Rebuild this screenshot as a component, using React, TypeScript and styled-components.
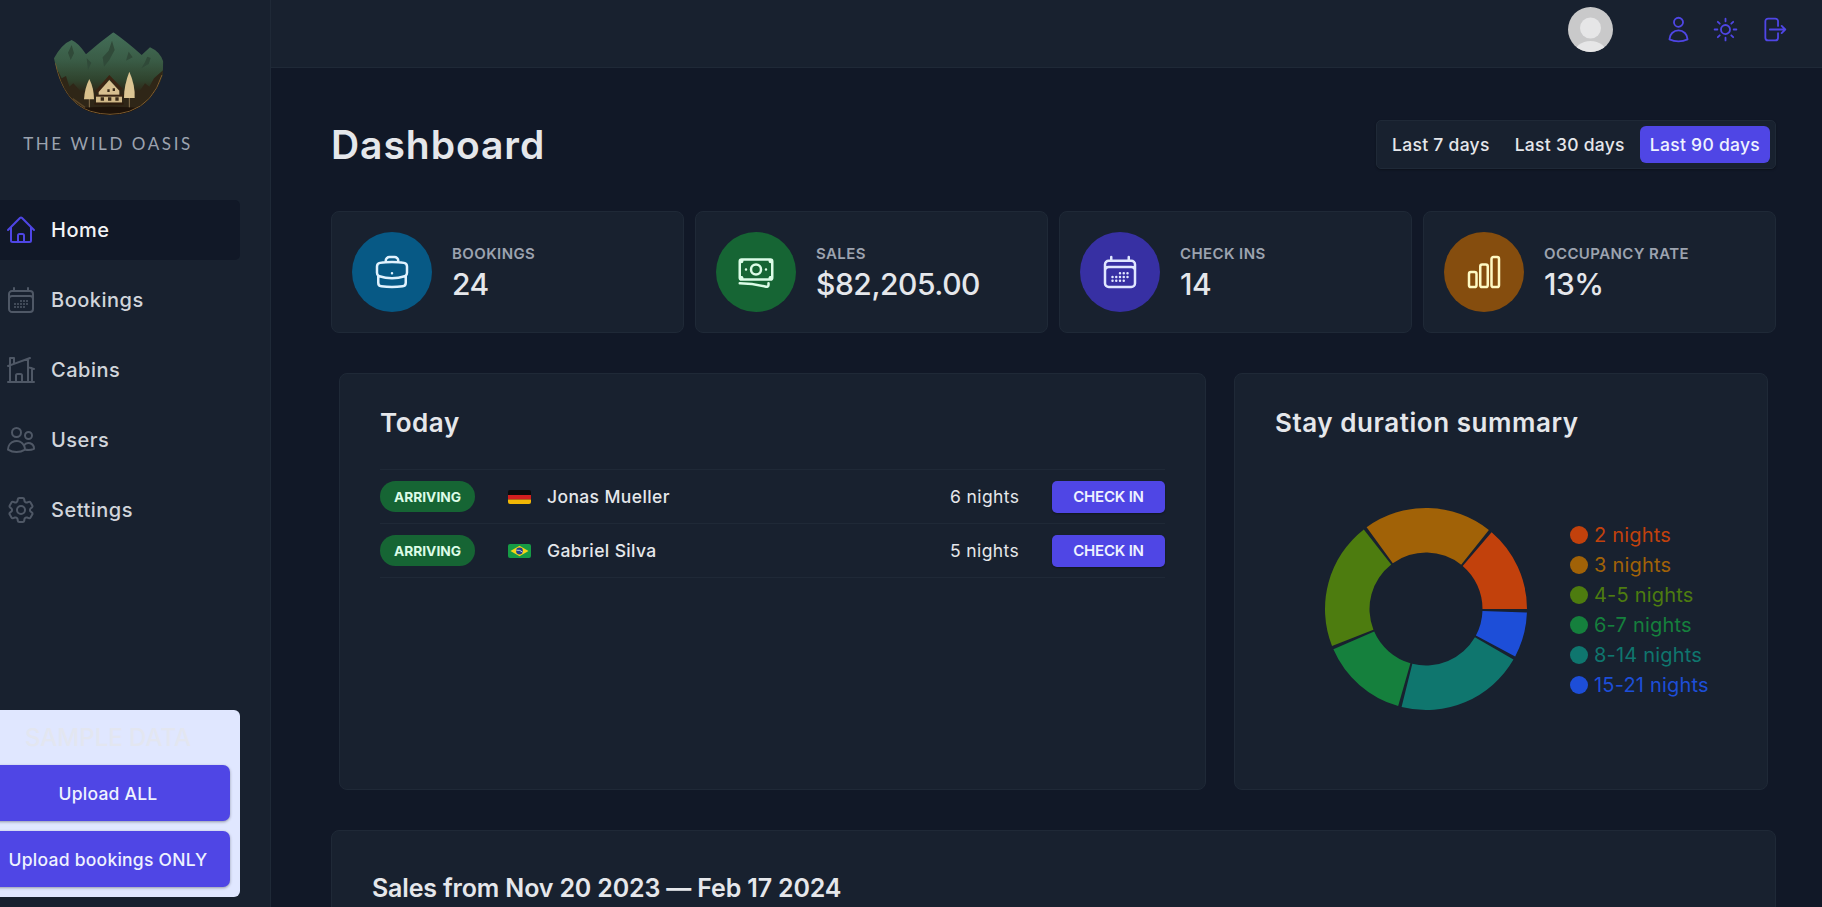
import * as React from 'react';
import styled, {createGlobalStyle} from 'styled-components';
import {
  HiOutlineHome,
  HiOutlineCalendarDays,
  HiOutlineHomeModern,
  HiOutlineUsers,
  HiOutlineCog6Tooth,
  HiOutlineUser,
  HiOutlineSun,
  HiOutlineArrowRightOnRectangle,
  HiOutlineBriefcase,
  HiOutlineBanknotes,
  HiOutlineChartBar,
} from 'react-icons/hi2';

const GlobalStyle = createGlobalStyle`
  html, body {
    margin: 0;
    height: 100%;
    overflow: hidden;
    background: #111827;
  }
  body {
    font-family: Inter, "Noto Sans", sans-serif;
    color: #e5e7eb;
  }
  * {
    box-sizing: border-box;
  }
`;

const Layout = styled.div`
  display: grid;
  grid-template-columns: 271px 1fr;
  grid-template-rows: 68px 1fr;
  height: 907px;
  overflow: hidden;
`;

const Sidebar = styled.aside`
  grid-row: 1 / -1;
  background: #18212f;
  border-right: 1px solid #1f2937;
  padding-right: 30px;
  padding-bottom: 10px;
  display: flex;
  overflow: hidden;
`;

const SidebarColumn = styled.div`
  flex: none;
  width: 264px;
  margin-left: -24px;
  display: flex;
  flex-direction: column;
`;

const LogoBox = styled.div`
  padding-top: 20px;
  display: flex;
  flex-direction: column;
  align-items: center;
  svg {
    margin-right: 6px;
    display: block;
  }
`;

const LogoText = styled.div`
  font-family: Lato, sans-serif;
  font-size: 17px;
  line-height: 20px;
  letter-spacing: 2.6px;
  color: #9ca3af;
  margin-top: 4px;
`;

const Nav = styled.nav`
  margin-top: 46px;
  display: flex;
  flex-direction: column;
  gap: 10px;
`;

const NavItem = styled.a<{$active?: boolean}>`
  height: 60px;
  padding-left: 29px;
  display: flex;
  align-items: center;
  gap: 14px;
  font-size: 20px;
  font-weight: 500;
  letter-spacing: 0.5px;
  border-radius: 5px;
  color: ${p => (p.$active ? '#f3f4f6' : '#d1d5db')};
  background: ${p => (p.$active ? '#111827' : 'transparent')};
  svg {
    flex: none;
    width: 32px;
    height: 32px;
    color: ${p => (p.$active ? '#4f46e5' : '#4f5866')};
  }
`;

const Uploader = styled.div`
  margin-top: auto;
  height: 187px;
  background: #e0e7ff;
  border-radius: 0 6px 6px 0;
  padding: 10px;
  display: flex;
  flex-direction: column;
  align-items: stretch;
  gap: 10px;
`;

const UploaderTitle = styled.div`
  font-size: 24px;
  line-height: 35px;
  font-weight: 500;
  text-align: center;
  color: #e3e6f0;
`;

const UploadButton = styled.button`
  height: 56px;
  border: none;
  border-radius: 7px;
  background: #4f46e5;
  color: #eef2ff;
  font-family: inherit;
  font-size: 17.5px;
  font-weight: 500;
  letter-spacing: 0.25px;
  box-shadow: 0 1px 3px rgba(0, 0, 0, 0.35);
`;

const Header = styled.header`
  background: #18212f;
  border-bottom: 1px solid #1f2937;
  padding: 7px 25px 0 0;
  display: flex;
  justify-content: flex-end;
  align-items: flex-start;
`;

const Avatar = styled.svg`
  width: 45px;
  height: 45px;
  margin-right: 41.5px;
  display: block;
`;

const HeaderIcon = styled.div`
  width: 47.5px;
  height: 45px;
  display: flex;
  align-items: center;
  justify-content: center;
  color: #4f46e5;
  svg {
    width: 29px;
    height: 29px;
  }
`;

const Main = styled.main`
  overflow: hidden;
  padding: 52px 46px 0 60px;
  background: #111827;
`;

const HeadRow = styled.div`
  display: flex;
  justify-content: space-between;
  align-items: center;
  margin-bottom: 42px;
`;

const PageTitle = styled.h1`
  margin: 0;
  font-size: 39px;
  line-height: 49px;
  font-weight: 600;
  letter-spacing: 0.95px;
  color: #e5e7eb;
`;

const Filter = styled.div`
  display: flex;
  gap: 5px;
  padding: 5px;
  background: #18212f;
  border: 1px solid #1f2937;
  border-radius: 5px;
  box-shadow: 0 1px 2px rgba(0, 0, 0, 0.3);
`;

const FilterButton = styled.button<{$active?: boolean}>`
  height: 37px;
  padding: 0 10px;
  border: none;
  border-radius: 6px;
  font-family: inherit;
  font-size: 17.5px;
  font-weight: 500;
  letter-spacing: 0.28px;
  color: ${p => (p.$active ? '#eef2ff' : '#e5e7eb')};
  background: ${p => (p.$active ? '#4f46e5' : 'transparent')};
`;

const Stats = styled.div`
  display: grid;
  grid-template-columns: repeat(4, 1fr);
  gap: 11px;
  margin-bottom: 40px;
`;

const StatCard = styled.div`
  height: 122px;
  padding: 20px;
  background: #18212f;
  border: 1px solid #1f2937;
  border-radius: 8px;
  display: flex;
  align-items: center;
  gap: 20px;
`;

const StatIcon = styled.div<{$bg: string; $fg: string}>`
  flex: none;
  width: 80px;
  height: 80px;
  border-radius: 50%;
  display: flex;
  align-items: center;
  justify-content: center;
  background: ${p => p.$bg};
  color: ${p => p.$fg};
  svg {
    width: 40px;
    height: 40px;
  }
`;

const StatText = styled.div`
  margin-top: 4px;
`;

const StatLabel = styled.div`
  font-size: 15px;
  line-height: 20px;
  font-weight: 600;
  letter-spacing: 0.4px;
  text-transform: uppercase;
  color: #9ca3af;
`;

const StatValue = styled.div`
  font-size: 30px;
  line-height: 40px;
  font-weight: 500;
  letter-spacing: -0.45px;
  color: #e5e7eb;
`;

const MiddleRow = styled.div`
  display: grid;
  grid-template-columns: minmax(0, 1fr) 534px;
  gap: 28px;
  padding: 0 8px;
  margin-bottom: 40px;
`;

const Card = styled.section`
  background: #18212f;
  border: 1px solid #1f2937;
  border-radius: 8px;
  padding: 31px 40px 40px;
`;

const TodayCard = styled(Card)`
  height: 417px;
`;

const StayCard = styled(Card)`
  height: 417px;
`;

const SalesCard = styled(Card)`
  height: 400px;
  padding-top: 40px;
`;

const CardTitle = styled.h2`
  margin: 0;
  font-size: 26px;
  line-height: 35px;
  font-weight: 600;
  letter-spacing: 0.55px;
  color: #e5e7eb;
`;

const SalesTitle = styled(CardTitle)`
  font-size: 25px;
  letter-spacing: -0.16px;
`;

const TodayList = styled.div`
  margin-top: 29px;
  border-bottom: 1px solid #1f2937;
`;

const TodayRow = styled.div`
  height: 54px;
  border-top: 1px solid #1f2937;
  display: grid;
  grid-template-columns: 128px 39px 1fr 102px 113px;
  align-items: center;
  font-size: 17.5px;
  font-weight: 500;
  letter-spacing: 0.38px;
`;

const Tag = styled.span`
  width: 95px;
  height: 31px;
  border-radius: 100px;
  background: #166534;
  color: #dcfce7;
  font-size: 13.75px;
  font-weight: 700;
  letter-spacing: 0;
  display: flex;
  align-items: center;
  justify-content: center;
  text-transform: uppercase;
`;

const Flag = styled.svg`
  width: 23px;
  height: 14px;
  border-radius: 2px;
  display: block;
`;

const GuestName = styled.span`
  color: #e5e7eb;
`;

const Nights = styled.span`
  font-weight: 400;
  letter-spacing: 0.4px;
  color: #e5e7eb;
`;

const CheckInButton = styled.button`
  width: 113px;
  height: 32px;
  border: none;
  border-radius: 5px;
  background: #4f46e5;
  color: #eef2ff;
  font-family: inherit;
  font-size: 15px;
  font-weight: 600;
  letter-spacing: -0.2px;
  text-transform: uppercase;
  box-shadow: 0 1px 2px rgba(0, 0, 0, 0.35);
`;

const ChartBody = styled.div`
  margin-top: 59px;
  margin-left: 41px;
  display: flex;
  align-items: center;
  gap: 34px;
`;

const Donut = styled.svg`
  flex: none;
  width: 220px;
  height: 220px;
  display: block;
`;

const Legend = styled.ul`
  list-style: none;
  margin: 2px 0 0;
  padding: 0;
`;

const LegendRow = styled.li<{$color: string}>`
  height: 30px;
  display: flex;
  align-items: center;
  gap: 6px;
  font-size: 20px;
  letter-spacing: 0.2px;
  color: ${p => p.$color};
`;

const LegendDot = styled.span<{$color: string}>`
  width: 18px;
  height: 18px;
  border-radius: 50%;
  background: ${p => p.$color};
`;

const Logo = () => (
  <svg width={150} height={110} viewBox="0 0 450 330">
    <defs>
      <linearGradient id="mtn" x1="0" y1="0" x2="0" y2="1">
        <stop offset="0" stopColor="#44705a"/>
        <stop offset="0.35" stopColor="#3a5c46"/>
        <stop offset="0.58" stopColor="#2f432d"/>
        <stop offset="0.72" stopColor="#2f2617"/>
        <stop offset="1" stopColor="#22160b"/>
      </linearGradient>
      <clipPath id="badge">
        <path d="M72 115 Q95 72 125 60 Q145 68 168 103 Q205 70 250 37 Q290 65 335 105 L360 82 Q390 95 400 125 L398 165 Q370 250 300 275 Q240 295 180 275 Q95 245 72 115Z"/>
      </clipPath>
    </defs>
    <g clipPath="url(#badge)">
      <rect x="60" y="30" width="350" height="260" fill="url(#mtn)"/>
      <path d="M125 75 L132 100 L122 120 L114 98Z M246 62 L236 92 L218 112 L222 140 L238 120 L254 90Z M352 110 L344 128 L334 145 L356 132 L362 114Z M170 115 L174 150 L184 128Z M296 95 L288 122 L308 112Z" fill="#304a39"/>
      <path d="M72 130 L95 175 L108 168 L118 200 L130 190 L150 212 L330 212 L345 190 L358 200 L372 175 L400 150 L400 300 L60 300Z" fill="#2f2617"/>
      <ellipse cx="240" cy="280" rx="140" ry="20" fill="#1e130a"/>
      <path d="M128 236 L165 262" stroke="#5a4528" strokeWidth="4"/>
      <path d="M178 210 L178 262 M298 205 L298 262" stroke="#b39a6c" strokeWidth="2"/>
      <path d="M178 177 Q192 205 192 238 L162 238 Q164 205 178 177Z" fill="#d9c08c"/>
      <path d="M298 155 Q316 195 314 234 L282 234 Q282 195 298 155Z" fill="#dcc593"/>
      <path d="M195 214 L238 165 L278 206 L268 212 L238 178 L205 220Z" fill="#3a2413"/>
      <path d="M206 216 L238 180 L268 212 L268 226 L206 226Z" fill="#d8bf90"/>
      <rect x="195" y="224" width="84" height="6" fill="#3a2413"/>
      <rect x="198" y="230" width="78" height="18" fill="#d1b887"/>
      <rect x="193" y="248" width="88" height="6" fill="#2e1c0e"/>
      <path d="M232 208h7v8h-7z M248 205h7v8h-7z M212 232h10v10h-10z M234 232h10v10h-10z M256 232h10v10h-10z" fill="#3a2a18"/>
      <path d="M76 130 Q100 248 182 274 Q240 292 298 274 Q370 250 396 165" fill="none" stroke="#7d5c30" strokeWidth="3"/>
    </g>
  </svg>
);

const navItems = [
  {label: 'Home', icon: <HiOutlineHome/>, active: true},
  {label: 'Bookings', icon: <HiOutlineCalendarDays/>},
  {label: 'Cabins', icon: <HiOutlineHomeModern/>},
  {label: 'Users', icon: <HiOutlineUsers/>},
  {label: 'Settings', icon: <HiOutlineCog6Tooth/>},
];

const stats = [
  {label: 'Bookings', value: '24', bg: '#075985', fg: '#e0f2fe', icon: <HiOutlineBriefcase/>},
  {label: 'Sales', value: '$82,205.00', bg: '#166534', fg: '#dcfce7', icon: <HiOutlineBanknotes/>},
  {label: 'Check ins', value: '14', bg: '#3730a3', fg: '#e0e7ff', icon: <HiOutlineCalendarDays/>},
  {label: 'Occupancy rate', value: '13%', bg: '#854d0e', fg: '#fef9c3', icon: <HiOutlineChartBar/>},
];

// angles are counter-clockwise from 3 o'clock, read off the reference
const slices = [
  {label: '2 nights', color: '#c2410c', from: 0, to: 49.5},
  {label: '3 nights', color: '#a16207', from: 51.5, to: 126},
  {label: '4-5 nights', color: '#4d7c0f', from: 128, to: 201.5},
  {label: '6-7 nights', color: '#15803d', from: 203.5, to: 254},
  {label: '8-14 nights', color: '#0f766e', from: 256, to: 330},
  {label: '15-21 nights', color: '#1d4ed8', from: 332, to: 358},
];

const wedge = (from: number, to: number) => {
  const cx = 110, cy = 110, R = 101, r = 56.5;
  const pt = (rad: number, deg: number) => {
    const a = (deg * Math.PI) / 180;
    return `${(cx + rad * Math.cos(a)).toFixed(2)} ${(cy - rad * Math.sin(a)).toFixed(2)}`;
  };
  const large = to - from > 180 ? 1 : 0;
  return `M${pt(R, from)} A${R} ${R} 0 ${large} 0 ${pt(R, to)} L${pt(r, to)} A${r} ${r} 0 ${large} 1 ${pt(r, from)}Z`;
};

const GermanFlag = () => (
  <Flag viewBox="0 0 23 14">
    <rect width="23" height="5" fill="#0b0b0b"/>
    <rect y="5" width="23" height="4.5" fill="#d21f1f"/>
    <rect y="9.5" width="23" height="4.5" fill="#f2b705"/>
  </Flag>
);

const BrazilFlag = () => (
  <Flag viewBox="0 0 23 14">
    <rect width="23" height="14" fill="#169b45"/>
    <path d="M11.5 1.8 L20.5 7 L11.5 12.2 L2.5 7Z" fill="#f7d417"/>
    <circle cx="11.5" cy="7" r="3.4" fill="#1f3f8f"/>
    <path d="M8.4 6.2 Q12 5.6 14.6 8.2" stroke="#fff" strokeWidth="0.7" fill="none"/>
  </Flag>
);

const today = [
  {name: 'Jonas Mueller', nights: '6 nights', flag: <GermanFlag/>},
  {name: 'Gabriel Silva', nights: '5 nights', flag: <BrazilFlag/>},
];

export default class App extends React.Component {
  render() {
    return (
      <Layout>
        <GlobalStyle/>
        <Sidebar>
          <SidebarColumn>
            <LogoBox>
              <Logo/>
              <LogoText>THE WILD OASIS</LogoText>
            </LogoBox>
            <Nav>
              {navItems.map(item => (
                <NavItem key={item.label} $active={item.active}>
                  {item.icon}
                  {item.label}
                </NavItem>
              ))}
            </Nav>
            <Uploader>
              <UploaderTitle>SAMPLE DATA</UploaderTitle>
              <UploadButton>Upload ALL</UploadButton>
              <UploadButton>Upload bookings ONLY</UploadButton>
            </Uploader>
          </SidebarColumn>
        </Sidebar>
        <Header>
          <Avatar viewBox="0 0 45 45">
            <defs>
              <clipPath id="avatarClip">
                <circle cx="22.5" cy="22.5" r="22.5"/>
              </clipPath>
            </defs>
            <g clipPath="url(#avatarClip)">
              <rect width="45" height="45" fill="#c9c9ca"/>
              <circle cx="22.5" cy="21" r="10.5" fill="#e6e6e7"/>
              <ellipse cx="22.5" cy="47" rx="16.5" ry="13" fill="#e6e6e7"/>
            </g>
          </Avatar>
          <HeaderIcon><HiOutlineUser/></HeaderIcon>
          <HeaderIcon><HiOutlineSun/></HeaderIcon>
          <HeaderIcon><HiOutlineArrowRightOnRectangle/></HeaderIcon>
        </Header>
        <Main>
          <HeadRow>
            <PageTitle>Dashboard</PageTitle>
            <Filter>
              <FilterButton>Last 7 days</FilterButton>
              <FilterButton>Last 30 days</FilterButton>
              <FilterButton $active>Last 90 days</FilterButton>
            </Filter>
          </HeadRow>
          <Stats>
            {stats.map(s => (
              <StatCard key={s.label}>
                <StatIcon $bg={s.bg} $fg={s.fg}>{s.icon}</StatIcon>
                <StatText>
                  <StatLabel>{s.label}</StatLabel>
                  <StatValue>{s.value}</StatValue>
                </StatText>
              </StatCard>
            ))}
          </Stats>
          <MiddleRow>
            <TodayCard>
              <CardTitle>Today</CardTitle>
              <TodayList>
                {today.map(t => (
                  <TodayRow key={t.name}>
                    <Tag>Arriving</Tag>
                    {t.flag}
                    <GuestName>{t.name}</GuestName>
                    <Nights>{t.nights}</Nights>
                    <CheckInButton>Check in</CheckInButton>
                  </TodayRow>
                ))}
              </TodayList>
            </TodayCard>
            <StayCard>
              <CardTitle>Stay duration summary</CardTitle>
              <ChartBody>
                <Donut viewBox="0 0 220 220">
                  {slices.map(s => (
                    <path key={s.label} d={wedge(s.from, s.to)} fill={s.color}/>
                  ))}
                </Donut>
                <Legend>
                  {slices.map(s => (
                    <LegendRow key={s.label} $color={s.color}>
                      <LegendDot $color={s.color}/>
                      {s.label}
                    </LegendRow>
                  ))}
                </Legend>
              </ChartBody>
            </StayCard>
          </MiddleRow>
          <SalesCard>
            <SalesTitle>Sales from Nov 20 2023 — Feb 17 2024</SalesTitle>
          </SalesCard>
        </Main>
      </Layout>
    );
  }
}
